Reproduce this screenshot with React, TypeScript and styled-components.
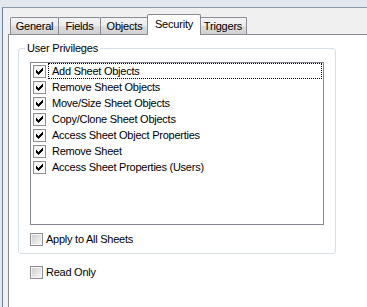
import React from 'react';
import styled, { createGlobalStyle } from 'styled-components';

const Global = createGlobalStyle`
  html, body { margin: 0; padding: 0; }
  body {
    background: #e3e8ee;
    font-family: "Liberation Sans", Arial, sans-serif;
    font-size: 11px;
    color: #000;
    overflow: hidden;
  }
`;

const Frame = styled.div`
  margin: 7px 0 0 2px;
  height: 300px;
  border-top: 1px solid #8a9bb0;
  border-left: 1px solid #6f8299;
  background: #f0f0f0;
  padding-left: 5px;
  display: flex;
  flex-direction: column;
`;

const TabRow = styled.div`
  height: 26px;
  display: flex;
  align-items: flex-end;
  padding-left: 2px;
`;

const Tab = styled.div<{ $w: number; $active?: boolean }>`
  position: relative;
  z-index: ${p => (p.$active ? 2 : 1)};
  box-sizing: border-box;
  width: ${p => p.$w}px;
  height: ${p => (p.$active ? 21 : 17)}px;
  margin-right: ${p => (p.$active ? -2 : -1)}px;
  margin-left: ${p => (p.$active ? -1 : 0)}px;
  margin-bottom: ${p => (p.$active ? -1 : 0)}px;
  border: 1px solid #898c95;
  border-bottom: none;
  border-radius: 2px 2px 0 0;
  background: ${p =>
    p.$active
      ? '#ffffff'
      : 'linear-gradient(#f3f3f3 0%, #ebebeb 50%, #dedede 50%, #d1d1d1 100%)'};
  display: flex;
  align-items: center;
  justify-content: center;
  padding-bottom: ${p => (p.$active ? 2 : 0)}px;
  letter-spacing: -0.2px;
  white-space: nowrap;
`;

const Pane = styled.div`
  flex: 1;
  border-top: 1px solid #898c95;
  border-left: 1px solid #898c95;
  background: #ffffff;
  padding: 13px 0 0 9px;
`;

const GroupBox = styled.div`
  box-sizing: border-box;
  width: 318px;
  border: 1px solid #d5dfe5;
  border-radius: 3px;
  padding: 0 0 7px 11px;
`;

const Legend = styled.div`
  display: table;
  margin: -7px 0 0 -5px;
  padding: 0 2px;
  background: #ffffff;
  line-height: 13px;
  letter-spacing: -0.2px;
`;

const ListBox = styled.div`
  box-sizing: border-box;
  margin-top: 7px;
  width: 294px;
  height: 163px;
  border: 1px solid #828790;
  background: #fff;
  padding: 0 1px 0 2px;
`;

const Row = styled.div`
  height: 16px;
  display: flex;
  align-items: center;
  gap: 2px;
`;

const ItemLabel = styled.div<{ $focused?: boolean }>`
  flex: 1;
  box-sizing: border-box;
  height: 16px;
  line-height: 14px;
  padding-left: 3px;
  border: 1px ${p => (p.$focused ? 'dotted #000' : 'solid transparent')};
  letter-spacing: -0.25px;
  white-space: nowrap;
`;

const ListCheck = styled.span`
  box-sizing: border-box;
  width: 13px;
  height: 13px;
  border: 1px solid #8e8f8f;
  background: linear-gradient(135deg, #f0f0f0, #ffffff);
  display: flex;
  align-items: center;
  justify-content: center;
  flex-shrink: 0;
`;

const OptionRow = styled.div<{ $mt: number; $ml?: number }>`
  margin-top: ${p => p.$mt}px;
  margin-left: ${p => p.$ml ?? 0}px;
  height: 13px;
  display: flex;
  align-items: center;
  gap: 3px;
`;

const Box3D = styled.span`
  box-sizing: border-box;
  width: 13px;
  height: 13px;
  border: 1px solid #8e8f8f;
  box-shadow: inset 0 0 0 1px #f4f4f4;
  background: linear-gradient(135deg, #c9cbce 0%, #e4e5e7 55%, #f6f6f6 100%);
  flex-shrink: 0;
`;

const OptionText = styled.span`
  line-height: 13px;
  letter-spacing: -0.25px;
  white-space: nowrap;
`;

const CheckMark = () => (
  <svg width="11" height="11" viewBox="0 0 11 11" shapeRendering="crispEdges">
    <g fill="#000">
      <rect x="8" y="2" width="1" height="1" />
      <rect x="7" y="3" width="2" height="1" />
      <rect x="2" y="4" width="1" height="1" />
      <rect x="6" y="4" width="3" height="1" />
      <rect x="2" y="5" width="2" height="1" />
      <rect x="5" y="5" width="3" height="1" />
      <rect x="2" y="6" width="5" height="1" />
      <rect x="3" y="7" width="3" height="1" />
      <rect x="4" y="8" width="1" height="1" />
    </g>
  </svg>
);

const tabs: { label: string; w: number; active?: boolean }[] = [
  { label: 'General', w: 49 },
  { label: 'Fields', w: 43 },
  { label: 'Objects', w: 49 },
  { label: 'Security', w: 54, active: true },
  { label: 'Triggers', w: 48 },
];

const items = [
  'Add Sheet Objects',
  'Remove Sheet Objects',
  'Move/Size Sheet Objects',
  'Copy/Clone Sheet Objects',
  'Access Sheet Object Properties',
  'Remove Sheet',
  'Access Sheet Properties (Users)',
];

export default function App() {
  return (
    <>
      <Global />
      <Frame>
        <TabRow>
          {tabs.map(t => (
            <Tab key={t.label} $w={t.w} $active={t.active}>
              {t.label}
            </Tab>
          ))}
        </TabRow>
        <Pane>
          <GroupBox>
            <Legend>User Privileges</Legend>
            <ListBox>
              {items.map((it, i) => (
                <Row key={it}>
                  <ListCheck>
                    <CheckMark />
                  </ListCheck>
                  <ItemLabel $focused={i === 0}>{it}</ItemLabel>
                </Row>
              ))}
            </ListBox>
            <OptionRow $mt={8}>
              <Box3D />
              <OptionText>Apply to All Sheets</OptionText>
            </OptionRow>
          </GroupBox>
          <OptionRow $mt={12} $ml={12}>
            <Box3D />
            <OptionText>Read Only</OptionText>
          </OptionRow>
        </Pane>
      </Frame>
    </>
  );
}
